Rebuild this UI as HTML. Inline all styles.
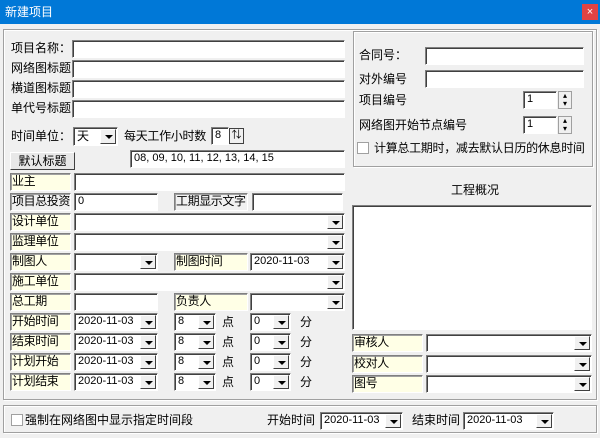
<!DOCTYPE html><html><head><meta charset="utf-8"><style>
*{box-sizing:border-box;margin:0;padding:0}
body{width:600px;height:438px;background:#f0f0f0;font-family:"Liberation Sans","Noto Sans CJK SC",sans-serif;font-size:12px;color:#000;position:relative;overflow:hidden}
.a{position:absolute;white-space:nowrap;line-height:16px}
.in{position:absolute;background:#fff;border:1px solid;border-color:#808080 #fff #fff #808080;box-shadow:inset 1px 1px 0 #404040;font-size:11px;line-height:15px;padding-left:3px;font-family:"Liberation Sans",sans-serif;white-space:nowrap;overflow:hidden}
.lb{position:absolute;background:#ffffe6;border:1px solid;border-color:#808080 #fff #fff #808080;box-shadow:inset 1px 1px 0 #a0a0a0;line-height:15px;padding-left:1px;letter-spacing:-0.4px;white-space:nowrap;overflow:hidden}
.lg{background:#f0f0f0}
.dd{position:absolute;right:1px;top:1px;bottom:1px;width:16px;background:#f0f0f0;border:1px solid;border-color:#fff #404040 #404040 #fff}
.dd:after{content:"";position:absolute;left:4px;top:5px;border-left:4px solid transparent;border-right:4px solid transparent;border-top:4px solid #000}
.grp{position:absolute;border:1px solid #a0a0a0;box-shadow:1px 1px 0 #fff inset,1px 1px 0 #fff}
.sp{position:absolute;width:14px;border:1px solid #a0a0a0;background:#f0f0f0}
</style></head><body>
<div class="a" style="left:0;top:0;width:600px;height:24px;background:#0078d7;color:#fff;font-size:12px;line-height:24px;padding-left:5px">新建项目</div>
<div class="a" style="left:582px;top:4px;width:16px;height:16px;background:#e04343;color:#fff;font-size:11px;line-height:16px;text-align:center">×</div>
<div class="grp" style="left:3px;top:29px;width:594px;height:371px"></div>
<div class="grp" style="left:3px;top:405px;width:594px;height:28px"></div>

<div class="a" style="left:11px;top:40px">项目名称：</div><div class="in" style="left:72px;top:40px;width:273px;height:18px"></div>
<div class="a" style="left:11px;top:60px">网络图标题</div><div class="in" style="left:72px;top:60px;width:273px;height:18px"></div>
<div class="a" style="left:11px;top:80px">横道图标题</div><div class="in" style="left:72px;top:80px;width:273px;height:18px"></div>
<div class="a" style="left:11px;top:100px">单代号标题</div><div class="in" style="left:72px;top:100px;width:273px;height:18px"></div>

<div class="a" style="left:11px;top:128px">时间单位：</div>
<div class="in" style="left:73px;top:127px;width:45px;height:19px;font-family:'Noto Sans CJK SC',sans-serif;font-size:12px">天<div class="dd"></div></div>
<div class="a" style="left:124px;top:128px;letter-spacing:-0.3px">每天工作小时数</div>
<div class="in" style="left:211px;top:127px;width:18px;height:18px">8</div>
<div class="a" style="left:229px;top:128px;width:15px;height:16px;border:1px solid #404040;background:#f0f0f0;font-size:10px;line-height:14px;text-align:center">⇅</div>

<div class="a" style="left:10px;top:152px;width:65px;height:18px;border:1px solid;border-color:#fff #404040 #404040 #fff;background:#e8e8e8;text-align:center;line-height:16px">默认标题</div>
<div class="in" style="left:130px;top:150px;width:215px;height:18px">08, 09, 10, 11, 12, 13, 14, 15</div>

<div class="lb" style="left:10px;top:173px;width:61px;height:18px">业主</div><div class="in" style="left:74px;top:173px;width:271px;height:18px"></div>
<div class="lb lg" style="left:10px;top:193px;width:61px;height:18px">项目总投资</div><div class="in" style="left:74px;top:193px;width:84px;height:18px">0</div>
<div class="lb lg" style="left:174px;top:193px;width:74px;height:18px">工期显示文字</div><div class="in" style="left:252px;top:193px;width:91px;height:18px"></div>

<div class="lb" style="left:10px;top:213px;width:61px;height:18px">设计单位</div><div class="in" style="left:74px;top:213px;width:271px;height:18px"><div class="dd"></div></div>
<div class="lb" style="left:10px;top:233px;width:61px;height:18px">监理单位</div><div class="in" style="left:74px;top:233px;width:271px;height:18px"><div class="dd"></div></div>
<div class="lb" style="left:10px;top:253px;width:61px;height:18px">制图人</div><div class="in" style="left:74px;top:253px;width:84px;height:18px"><div class="dd"></div></div>
<div class="lb" style="left:174px;top:253px;width:74px;height:18px">制图时间</div><div class="in" style="left:250px;top:253px;width:95px;height:18px">2020-11-03<div class="dd"></div></div>
<div class="lb" style="left:10px;top:273px;width:61px;height:18px">施工单位</div><div class="in" style="left:74px;top:273px;width:271px;height:18px"><div class="dd"></div></div>
<div class="lb" style="left:10px;top:293px;width:61px;height:18px">总工期</div><div class="in" style="left:74px;top:293px;width:84px;height:18px"></div>
<div class="lb" style="left:174px;top:293px;width:74px;height:18px">负责人</div><div class="in" style="left:250px;top:293px;width:95px;height:18px"><div class="dd"></div></div>

<div class="lb" style="left:10px;top:313px;width:61px;height:18px">开始时间</div><div class="in" style="left:74px;top:313px;width:84px;height:18px">2020-11-03<div class="dd"></div></div><div class="in" style="left:174px;top:313px;width:42px;height:18px">8<div class="dd"></div></div><div class="a" style="left:222px;top:314px">点</div><div class="in" style="left:250px;top:313px;width:41px;height:18px">0<div class="dd"></div></div><div class="a" style="left:300px;top:314px">分</div>
<div class="lb" style="left:10px;top:333px;width:61px;height:18px">结束时间</div><div class="in" style="left:74px;top:333px;width:84px;height:18px">2020-11-03<div class="dd"></div></div><div class="in" style="left:174px;top:333px;width:42px;height:18px">8<div class="dd"></div></div><div class="a" style="left:222px;top:334px">点</div><div class="in" style="left:250px;top:333px;width:41px;height:18px">0<div class="dd"></div></div><div class="a" style="left:300px;top:334px">分</div>
<div class="lb" style="left:10px;top:353px;width:61px;height:18px">计划开始</div><div class="in" style="left:74px;top:353px;width:84px;height:18px">2020-11-03<div class="dd"></div></div><div class="in" style="left:174px;top:353px;width:42px;height:18px">8<div class="dd"></div></div><div class="a" style="left:222px;top:354px">点</div><div class="in" style="left:250px;top:353px;width:41px;height:18px">0<div class="dd"></div></div><div class="a" style="left:300px;top:354px">分</div>
<div class="lb" style="left:10px;top:373px;width:61px;height:18px">计划结束</div><div class="in" style="left:74px;top:373px;width:84px;height:18px">2020-11-03<div class="dd"></div></div><div class="in" style="left:174px;top:373px;width:42px;height:18px">8<div class="dd"></div></div><div class="a" style="left:222px;top:374px">点</div><div class="in" style="left:250px;top:373px;width:41px;height:18px">0<div class="dd"></div></div><div class="a" style="left:300px;top:374px">分</div>

<div class="grp" style="left:353px;top:31px;width:240px;height:136px"></div>
<div class="a" style="left:359px;top:47px">合同号：</div><div class="in" style="left:425px;top:47px;width:159px;height:18px"></div>
<div class="a" style="left:359px;top:71px">对外编号</div><div class="in" style="left:425px;top:70px;width:159px;height:18px"></div>
<div class="a" style="left:359px;top:92px">项目编号</div><div class="in" style="left:523px;top:91px;width:34px;height:18px">1</div><div class="sp" style="left:558px;top:91px;height:18px;font-size:8px;line-height:8px;text-align:center">▴<br>▾</div>
<div class="a" style="left:359px;top:117px">网络图开始节点编号</div><div class="in" style="left:523px;top:116px;width:34px;height:18px">1</div><div class="sp" style="left:558px;top:116px;height:18px;font-size:8px;line-height:8px;text-align:center">▴<br>▾</div>
<div class="a" style="left:357px;top:142px;width:12px;height:12px;border:1px solid #a0a0a0;background:#fff"></div>
<div class="a" style="left:374px;top:140px;letter-spacing:-0.3px">计算总工期时，减去默认日历的休息时间</div>

<div class="a" style="left:451px;top:182px">工程概况</div>
<div class="in" style="left:352px;top:205px;width:240px;height:125px"></div>
<div class="lb" style="left:352px;top:334px;width:71px;height:18px">审核人</div><div class="in" style="left:426px;top:334px;width:166px;height:18px"><div class="dd"></div></div>
<div class="lb" style="left:352px;top:355px;width:71px;height:18px">校对人</div><div class="in" style="left:426px;top:355px;width:166px;height:18px"><div class="dd"></div></div>
<div class="lb" style="left:352px;top:375px;width:71px;height:18px">图号</div><div class="in" style="left:426px;top:375px;width:166px;height:18px"><div class="dd"></div></div>

<div class="a" style="left:11px;top:414px;width:12px;height:12px;border:1px solid #a0a0a0;background:#fff"></div>
<div class="a" style="left:25px;top:412px">强制在网络图中显示指定时间段</div>
<div class="a" style="left:267px;top:412px">开始时间</div><div class="in" style="left:320px;top:412px;width:83px;height:18px">2020-11-03<div class="dd"></div></div>
<div class="a" style="left:412px;top:412px">结束时间</div><div class="in" style="left:463px;top:412px;width:91px;height:18px">2020-11-03<div class="dd"></div></div>
</body></html>
